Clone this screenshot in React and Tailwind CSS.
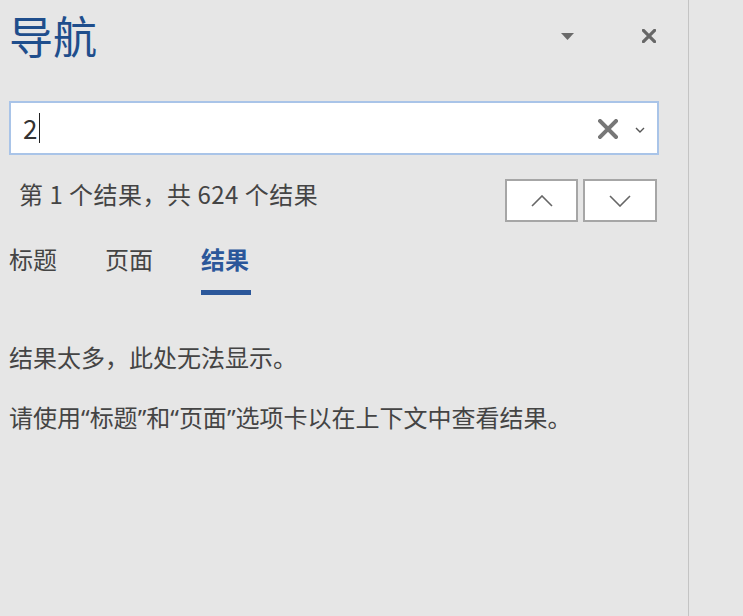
import React from "react";

const font = { fontFamily: '"Noto Sans CJK SC", "Noto Sans", sans-serif' };
const latin = { fontFamily: '"Noto Sans", sans-serif' };

function CloseIcon({ size, stroke, color }) {
    return (
        <svg width={size} height={size} viewBox="0 0 20 20">
            <path d="M2 2 L18 18 M18 2 L2 18" stroke={color} strokeWidth={stroke} strokeLinecap="square" fill="none" />
        </svg>
    );
}

function Chevron({ up }) {
    return (
        <svg width="22" height="12" viewBox="0 0 22 12">
            <path
                d={up ? "M1 11 L11 1 L21 11" : "M1 1 L11 11 L21 1"}
                stroke="#666"
                strokeWidth="1.6"
                fill="none"
            />
        </svg>
    );
}

// narrow curly quotes like the original UI font
function Q({ children }) {
    return <span style={latin}>{children}</span>;
}

export default function App() {
    return (
        <div className="w-full h-[616px] bg-[#e6e6e6] flex" style={font}>
            <div className="w-[689px] h-full border-r border-[#c4c4c4] flex flex-col pl-[9px] pr-[30px]">

                {/* header */}
                <div className="mt-[13px] h-[44px] flex items-center">
                    <h1 className="text-[44px] leading-none text-[#1f4e8c] flex-1">导航</h1>
                    <svg width="13" height="7" viewBox="0 0 13 7" className="mr-[68px] mt-[2px]">
                        <path d="M0 0 H13 L6.5 7 Z" fill="#6a6a6a" />
                    </svg>
                    <div className="mr-[2px] mt-[2px]">
                        <CloseIcon size={14} stroke={4.6} color="#676767" />
                    </div>
                </div>

                {/* search box */}
                <div className="mt-[44px] h-[54px] w-[650px] bg-white border-2 border-[#a9c4e8] flex items-center pl-[12px] pr-[12px]">
                    <div className="flex-1 flex items-center">
                        <span className="text-[26px] leading-none text-[#333]">2</span>
                        <span className="w-px h-[30px] bg-[#222] ml-[2px]" />
                    </div>
                    <div className="mr-[17px] mt-[2px]">
                        <CloseIcon size={20} stroke={4} color="#777" />
                    </div>
                    <svg width="10" height="6" viewBox="0 0 10 6" className="mt-[4px]">
                        <path d="M1 1 L5 5 L9 1" stroke="#555" strokeWidth="1.4" fill="none" />
                    </svg>
                </div>

                {/* result count */}
                <div className="mt-[24px] h-[43px] w-[650px] flex items-center">
                    <span className="flex-1 pl-[10px] pb-[13px] text-[24px] leading-none tracking-[0.5px] text-[#444]">
                        第 1 个结果，共 624 个结果
                    </span>
                    <div className="flex gap-[5px] mr-[2px]">
                        <button className="w-[73px] h-[43px] bg-white border-2 border-[#a6a6a6] flex items-center justify-center">
                            <Chevron up />
                        </button>
                        <button className="w-[74px] h-[43px] bg-white border-2 border-[#a6a6a6] flex items-center justify-center">
                            <Chevron />
                        </button>
                    </div>
                </div>

                {/* tabs */}
                <div className="mt-[25px] flex gap-[48px] text-[24px] leading-none">
                    <div className="flex flex-col">
                        <span className="text-[#444]">标题</span>
                    </div>
                    <div className="flex flex-col">
                        <span className="text-[#444]">页面</span>
                    </div>
                    <div className="flex flex-col items-stretch">
                        <span className="text-[#2b579a] font-bold">结果</span>
                        <span className="mt-[19px] h-[5px] w-[50px] bg-[#2b579a]" />
                    </div>
                </div>

                {/* body */}
                <div className="mt-[50px] text-[24px] leading-none text-[#444]">
                    <p>结果太多，此处无法显示。</p>
                    <p className="mt-[36px]">
                        请使用<Q>“</Q>标题<Q>”</Q>和<Q>“</Q>页面<Q>”</Q>选项卡以在上下文中查看结果。
                    </p>
                </div>
            </div>
            <div className="flex-1" />
        </div>
    );
}
